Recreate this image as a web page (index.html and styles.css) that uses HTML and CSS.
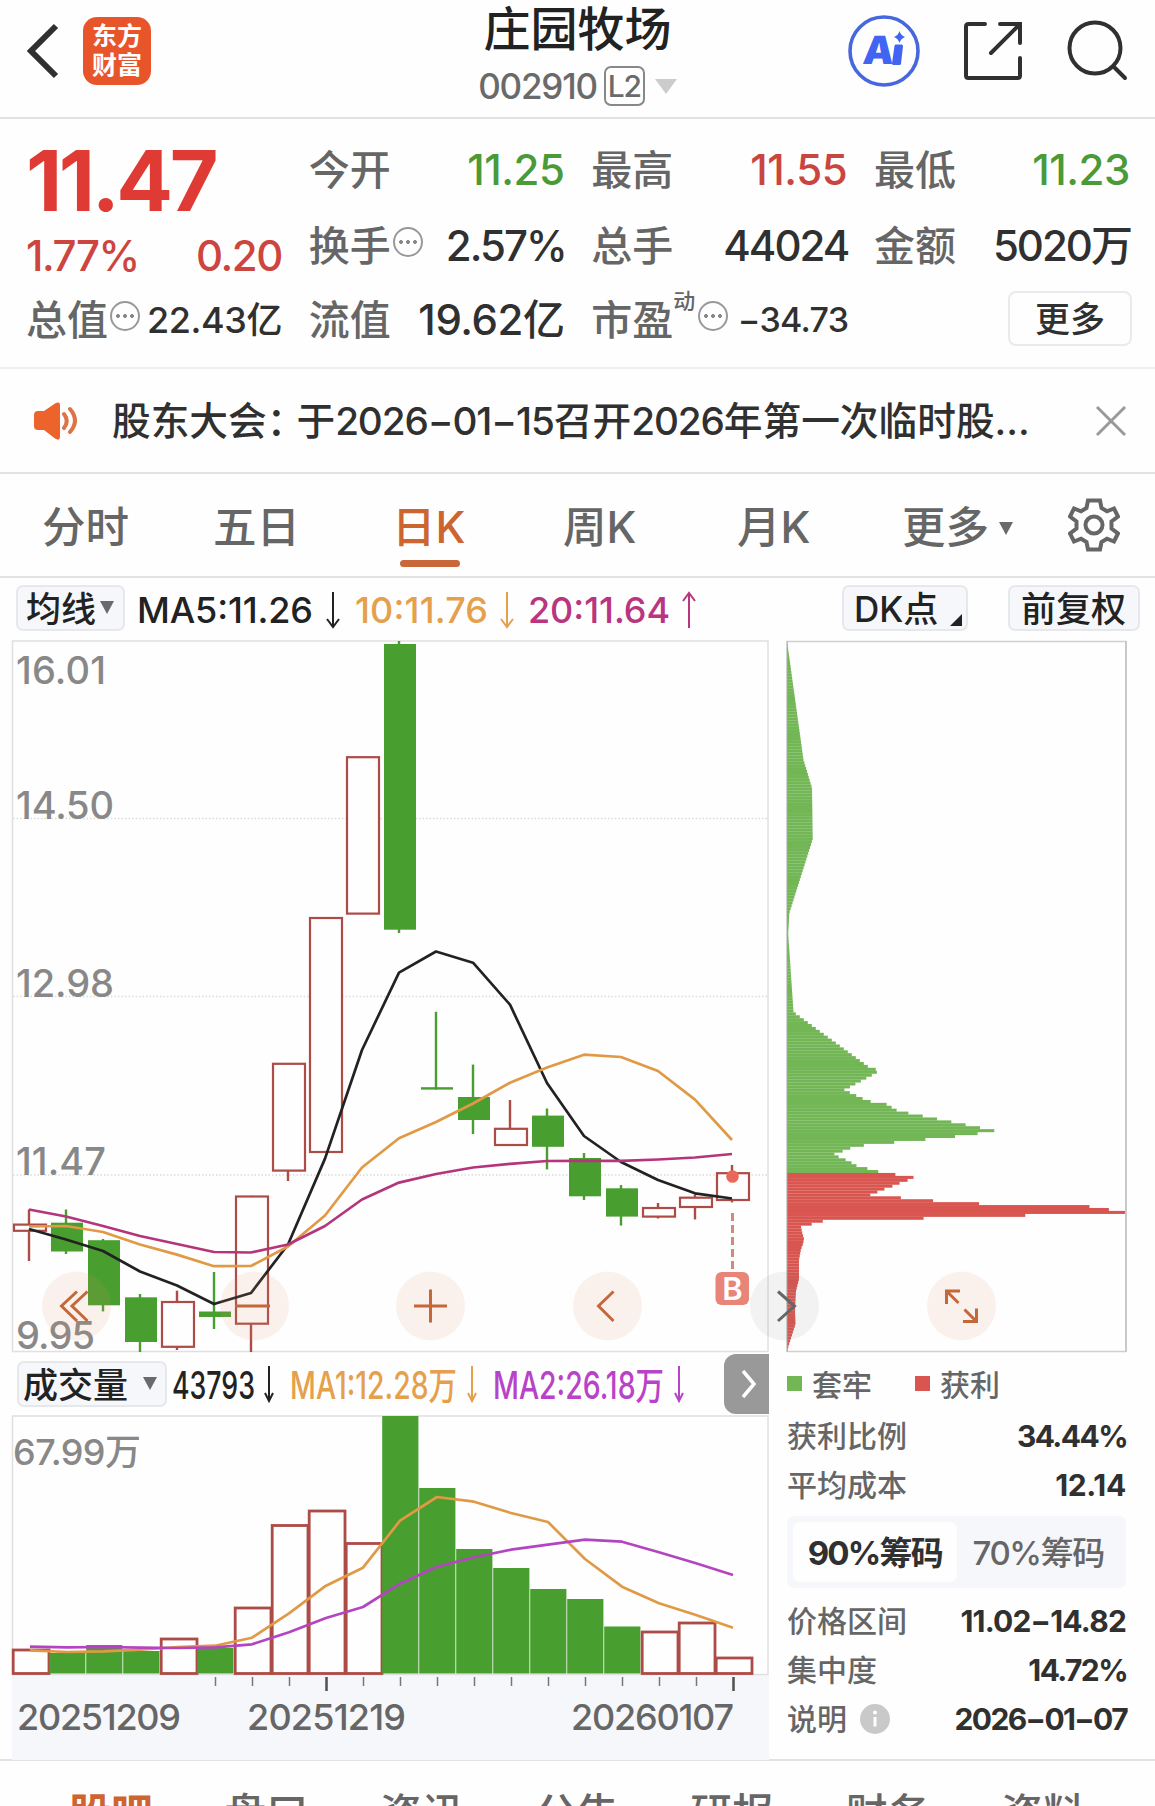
FILE: index.html
```html
<!DOCTYPE html>
<html lang="zh-CN">

<head>
    <meta charset="UTF-8">
    <title>庄园牧场 002910</title>
    <link rel="stylesheet" href="styles.css">
</head>

<body>
    <header class="topbar">
        <div class="topbar-left">
            <svg class="back" width="34" height="60" viewBox="0 0 34 60"><path d="M31 5 6 30l25 25" /></svg>
            <div class="logo"><span>东方</span><span>财富</span></div>
        </div>
        <div class="stock">
            <h1>庄园牧场</h1>
            <div class="code">002910<span class="level">L2</span><i class="tri"></i></div>
        </div>
        <div class="topbar-right">
            <svg width="74" height="74" viewBox="0 0 74 74">
                <circle cx="37" cy="37" r="34" fill="none" stroke="#4668dc" stroke-width="3.6" />
                <text x="0" y="0" transform="translate(15 50) skewX(-5)" class="ai">A</text>
                <path d="M49 32h5.500l-2 17.500h-6z" fill="#4164f2" stroke="#4164f2" stroke-width="3" stroke-linejoin="round" />
                <path d="M52.500 17q1.300 4.500 5.500 6-4.200 1.500-5.500 6-1.300-4.500-5.500-6 4.200-1.500 5.500-6z" fill="#4164f2" />
            </svg>
            <svg width="60" height="60" viewBox="0 0 60 60" class="line-icon">
                <path d="M22 3H5.500Q3 3 3 5.500v49Q3 57 5.500 57h49q2.500 0 2.500-2.500V37M37 3h20v19M57 3 28 32" />
            </svg>
            <svg width="62" height="62" viewBox="0 0 62 62" class="line-icon">
                <circle cx="29" cy="28" r="25.500" />
                <path d="m48 47 11 11" />
            </svg>
        </div>
    </header>

    <section class="quote">
        <div class="col first">
            <div class="price">11.47</div>
            <div class="row change"><b>1.77%</b><b>0.20</b></div>
            <div class="row small"><span>总值<i class="tip"></i></span><b>22.43亿</b></div>
        </div>
        <div class="col">
            <div class="row"><span>今开</span><b class="down">11.25</b></div>
            <div class="row"><span>换手<i class="tip"></i></span><b class="tight">2.57%</b></div>
            <div class="row"><span>流值</span><b>19.62亿</b></div>
        </div>
        <div class="col">
            <div class="row"><span>最高</span><b class="up">11.55</b></div>
            <div class="row"><span>总手</span><b class="tight">44024</b></div>
            <div class="row small pe"><span>市盈<sup>动</sup><i class="tip"></i></span><b>−34.73</b></div>
        </div>
        <div class="col">
            <div class="row"><span>最低</span><b class="down">11.23</b></div>
            <div class="row"><span>金额</span><b class="tight">5020万</b></div>
            <div class="row last"><button class="more">更多</button></div>
        </div>
    </section>

    <section class="notice">
        <svg width="48" height="40" viewBox="0 0 48 40">
            <path d="M2 14q0-4 4-4h6L23 2.500q5-3 5 2v31q0 5-5 2L12 29H6q-4 0-4-4z" fill="#ec642c" />
            <path d="M32 13q5.500 7 0 14M38 8q10 11.500 0 23" fill="none" stroke="#dd7447" stroke-width="4" stroke-linecap="round" />
        </svg>
        <p>股东大会<span class="colon">：</span>于<span class="num">2026−01−15</span>召开<span class="num">2026</span>年第一次临时股...</p>
        <svg class="close" width="32" height="32" viewBox="0 0 32 32"><path d="m2 2 28 28M30 2 2 30" /></svg>
    </section>

    <nav class="tabs">
        <span>分时</span>
        <span>五日</span>
        <span class="active">日K</span>
        <span>周K</span>
        <span>月K</span>
        <span class="tab-more">更多<i class="tri"></i></span>
        <svg width="52" height="54" viewBox="-26 -27 52 54" class="gear">
            <path d="M-6-24.500H6L7.500-17 13-13.700 20-16.500 24-8.500 17.500-3.500V3.500L24 8.500 20 16.500 13 13.700 7.500 17 6 24.500H-6L-7.500 17-13 13.700-20 16.500-24 8.500-17.500 3.500V-3.500L-24-8.500-20-16.500-13-13.700-7.500-17z" />
            <circle r="8.500" />
        </svg>
    </nav>

    <div class="toolbar">
        <button class="chip">均线<i class="tri"></i></button>
        <svg class="ma" width="590" height="46" viewBox="130 585 590 46">
            <text x="137" y="623" textLength="176" fill="#222">MA5:11.26</text>
            <path d="M333 592v34m-6-7 6 8 6-8" stroke="#222" />
            <text x="355" y="623" textLength="133" fill="#e5a04c">10:11.76</text>
            <path d="M507 592v34m-6-7 6 8 6-8" stroke="#e5a04c" />
            <text x="528" y="623" textLength="142" fill="#b9357f">20:11.64</text>
            <path d="M689 628v-34m-6 7 6-8 6 8" stroke="#b9357f" />
        </svg>
        <button class="chip dk">DK点<i class="corner"></i></button>
        <button class="chip fq">前复权</button>
    </div>

    <!-- K线 + 筹码分布 -->
    <svg class="kline" width="1155" height="713" viewBox="0 640 1155 713">
        <rect x="12.500" y="641" width="755.500" height="710.500" fill="none" stroke="#e0e0e0" stroke-width="1.500" />
        <path class="grid" d="M13 818.500h754M13 996.500h754M13 1175h754" />
        <g id="chips"></g>
        <path d="M787 641.500h339M787 1351.500h339" stroke="#d0d0d0" stroke-width="1.300" />
        <path d="M787 641v711" stroke="#a5a5a5" stroke-width="1" />
        <path d="M1126 641v711" stroke="#c9c9c9" stroke-width="2" />
        <g id="candles"></g>
        <g id="maLines"></g>
        <g class="scale">
            <text x="16" y="684" textLength="90">16.01</text>
            <text x="16" y="819" textLength="98">14.50</text>
            <text x="16" y="997" textLength="98">12.98</text>
            <text x="16" y="1175" textLength="90">11.47</text>
            <text x="16" y="1349" textLength="79">9.95</text>
        </g>

        <!-- 买入点 -->
        <circle cx="732.500" cy="1176.500" r="6.300" fill="#e8695c" />
        <path d="M732.500 1213v58" stroke="#cf8a7c" stroke-width="3" stroke-dasharray="8 4" />
        <rect x="715.500" y="1272" width="33.500" height="33" rx="6" fill="#e98478" />
        <text x="732.500" y="1299.500" class="buy">B</text>

        <g class="float">
            <circle cx="76.500" cy="1306" r="34.500" />
            <circle cx="254.500" cy="1306" r="34.500" />
            <circle cx="430.500" cy="1306" r="34.500" />
            <circle cx="607.500" cy="1306" r="34.500" />
            <circle cx="784.500" cy="1306" r="34.500" class="off" />
            <circle cx="961.500" cy="1306" r="34.500" />
            <path d="M77 1291.500 61.500 1306 77 1321M87.500 1291.500 72 1306 87.500 1321" />
            <path d="M235 1306h35" />
            <path d="M414 1306h33M430.500 1289.500v33" />
            <path d="M613.500 1291.500 598.500 1306l15 15" />
            <path d="m778 1291.500 16.500 14.500-16.500 15" class="off" />
            <path d="M946.500 1304v-13H960M947 1291.500l11.500 11.500M976.500 1308.500v13H963M976 1321l-11.500-11.500" />
        </g>
    </svg>

    <div class="lower">
        <section class="volume">
            <div class="vol-bar">
                <button class="chip">成交量<i class="tri"></i></button>
                <svg width="530" height="46" viewBox="170 1361 530 46" class="ma">
                    <text x="172" y="1399" textLength="83" lengthAdjust="spacingAndGlyphs" fill="#222">43793</text>
                    <path d="M269 1366v34m-4-7 4 8 4-8" stroke="#222" />
                    <text x="290" y="1399" textLength="167" lengthAdjust="spacingAndGlyphs" fill="#e5a04c">MA1:12.28万</text>
                    <path d="M472 1366v34m-4-7 4 8 4-8" stroke="#e5a04c" />
                    <text x="493" y="1399" textLength="171" lengthAdjust="spacingAndGlyphs" fill="#b842c8">MA2:26.18万</text>
                    <path d="M679 1366v34m-4-7 4 8 4-8" stroke="#b842c8" />
                </svg>
                <button class="next"><svg width="20" height="32" viewBox="0 0 20 32"><path d="m4 3 11 13L4 29" /></svg></button>
            </div>
            <svg width="769" height="345" viewBox="0 1415 769 345">
                <rect x="12" y="1675" width="757" height="85" fill="#f6f7fa" />
                <rect x="12.500" y="1416" width="755.500" height="258.500" fill="none" stroke="#e0e0e0" stroke-width="1.500" />
                <g id="volBars"></g>
                <g id="volLines"></g>
                <g id="ticks"></g>
                <g class="scale">
                    <text x="13" y="1465" textLength="128" class="vol-max">67.99万</text>
                </g>
                <g class="dates">
                    <text x="17" y="1730" textLength="164">20251209</text>
                    <text x="247" y="1730" textLength="159">20251219</text>
                    <text x="571" y="1730" textLength="163">20260107</text>
                </g>
            </svg>
        </section>

        <aside class="panel">
            <div class="legend">
                <span><i></i>套牢</span>
                <span class="win"><i></i>获利</span>
            </div>
            <div class="item"><span>获利比例</span><b class="tight">34.44%</b></div>
            <div class="item"><span>平均成本</span><b>12.14</b></div>
            <div class="switch">
                <span class="on">90%筹码</span>
                <span>70%筹码</span>
            </div>
            <div class="item"><span>价格区间</span><b class="range">11.02−14.82</b></div>
            <div class="item"><span>集中度</span><b class="tight">14.72%</b></div>
            <div class="item">
                <span>说明<svg width="30" height="30" viewBox="0 0 30 30"><circle cx="15" cy="15" r="15" fill="#c9c9c9" /><circle cx="15" cy="8.500" r="2" fill="#fff" /><path d="M15 13v9.500" stroke="#fff" stroke-width="3" /></svg></span>
                <b class="tight">2026−01−07</b>
            </div>
        </aside>
    </div>

    <nav class="bottom">
        <span class="active">股吧</span>
        <span>盘口</span>
        <span>资讯</span>
        <span>公告</span>
        <span>研报</span>
        <span>财务</span>
        <span>资料</span>
    </nav>

    <script src="chart.js"></script>
</body>

</html>
```

FILE: styles.css
```css
* {
    box-sizing: border-box;
}

body {
    margin: 0;
    width: 1155px;
    height: 1806px;
    overflow: hidden;
    background: #fefefe;
    color: #303030;
    font-family: Inter, "Noto Sans CJK SC", sans-serif;
    font-weight: 500;
    line-height: 1;
}

button {
    font: inherit;
    color: inherit;
    padding: 0;
}

svg {
    display: block;
    flex: none;
}

/* 小三角 */
.tri {
    display: inline-block;
    border: solid transparent;
    border-width: 13px 7.5px 0;
    border-top-color: #6a6a6a;
}

/* 顶部导航 */
.topbar {
    height: 119px;
    border-bottom: 2px solid #e2e2e2;
    display: grid;
    grid-template-columns: 1fr auto 1fr;
}

.topbar-left {
    display: flex;
    align-items: center;
    height: 102px;
    padding-left: 25px;
    gap: 24px;
}

.back path {
    fill: none;
    stroke: #303030;
    stroke-width: 6;
}

.logo {
    width: 68px;
    height: 68px;
    border-radius: 14px;
    background: #e9552a;
    color: #fff;
    display: flex;
    flex-direction: column;
    align-items: center;
    justify-content: center;
    gap: 4px;
    font-size: 25px;
    font-weight: 700;
}

.stock {
    display: flex;
    flex-direction: column;
    align-items: center;
    padding-top: 5px;
}

.stock h1 {
    margin: 0;
    font-size: 47px;
    font-weight: 500;
    color: #222;
}

.code {
    display: flex;
    align-items: center;
    height: 40px;
    margin-top: 14px;
    font-size: 35px;
    letter-spacing: -1.2px;
    color: #6a6a6a;
}

.level {
    width: 41px;
    height: 40px;
    margin-left: 7px;
    border: 2px solid #888;
    border-radius: 7px;
    font-size: 30px;
    line-height: 37px;
    text-align: center;
}

.code .tri {
    margin-left: 10px;
    border-width: 15px 11.5px 0;
    border-top-color: #ccc;
}

.topbar-right {
    display: flex;
    align-items: center;
    justify-content: flex-end;
    height: 102px;
    padding-right: 27px;
}

.topbar-right svg + svg {
    margin-left: 42px;
}

.topbar-right svg:last-child {
    margin-left: 43px;
}

.line-icon {
    fill: none;
    stroke: #303030;
    stroke-width: 4;
    stroke-linecap: round;
}

.ai {
    font-size: 39px;
    font-weight: 900;
    fill: #4164f2;
}

/* 行情数据 */
.quote {
    height: 250px;
    padding: 13px 25px 0 26px;
    border-bottom: 2px solid #f0f0f0;
    display: grid;
    grid-template-columns: repeat(4, 256px);
    justify-content: space-between;
}

.row {
    display: flex;
    align-items: center;
    justify-content: space-between;
    height: 76px;
    font-size: 41px;
    color: #666;
    white-space: nowrap;
}

.row:last-child {
    height: 72px;
}

.row span {
    display: flex;
    align-items: center;
}

.row b {
    font-size: 42px;
    font-weight: 500;
    letter-spacing: -.4px;
    color: #303030;
}

.row b.tight {
    letter-spacing: -2px;
    margin-right: -1px;
}

.row.small b {
    font-size: 36px;
}

.row.pe b {
    font-size: 34px;
    letter-spacing: -.7px;
    margin-right: -1px;
}

.row .up {
    color: #c9453d;
}

.row .down {
    color: #4a9a38;
}

.price {
    height: 96px;
    line-height: 98px;
    font-size: 84px;
    font-weight: 700;
    letter-spacing: -3.4px;
    color: #df3a33;
}

.change {
    height: 56px;
}

.row.change b {
    letter-spacing: -1.4px;
    color: #cc453e;
}

.tip {
    width: 30px;
    height: 30px;
    margin: -8px 0 0 2px;
    border: 2px solid #999;
    border-radius: 50%;
    background:
        radial-gradient(circle at 6px 13px, #888 1.7px, transparent 2.2px),
        radial-gradient(circle at 13px 13px, #888 1.7px, transparent 2.2px),
        radial-gradient(circle at 20px 13px, #888 1.7px, transparent 2.2px);
}

.row sup {
    font-size: 22px;
    align-self: flex-start;
    margin-top: -10px;
}

.pe .tip {
    margin-left: 3px;
}

.last {
    justify-content: flex-end;
}

.more {
    width: 124px;
    height: 55px;
    margin: -4px -2px 0 0;
    padding-top: 2px;
    border: 2px solid #e8eaec;
    border-radius: 8px;
    background: #fefefe;
    color: #303030;
    font-size: 35px;
}

/* 公告条 */
.notice {
    height: 105px;
    padding: 0 28px 0 32px;
    border-bottom: 2px solid #e2e2e2;
    display: flex;
    align-items: center;
}

.notice p {
    flex: 1;
    margin: 2px 0 0 32px;
    font-size: 38.7px;
    white-space: nowrap;
}

.notice .colon {
    margin-right: -9px;
}

.notice .num {
    letter-spacing: -1.1px;
}

.close path {
    fill: none;
    stroke: #999;
    stroke-width: 3;
}

/* 周期切换 */
.tabs {
    height: 104px;
    padding: 0 35px 0 42px;
    border-bottom: 2px solid #e2e2e2;
    display: grid;
    grid-template-columns: 171px 179px 171px 174px 165px 1fr 52px;
    align-items: center;
    justify-items: start;
    font-size: 43.5px;
    color: #666;
}

.tabs span {
    margin-top: 6px;
}

.tabs .active {
    position: relative;
    color: #cd6531;
}

.tabs .active::after {
    content: "";
    position: absolute;
    left: 8px;
    bottom: -17px;
    width: 60px;
    height: 7px;
    border-radius: 4px;
    background: #c9673a;
}

.tab-more {
    display: flex;
    align-items: center;
    gap: 10px;
}

.gear {
    fill: none;
    stroke: #666;
    stroke-width: 4;
}

/* 指标栏 */
.toolbar {
    height: 62px;
    padding: 7px 15px 0 16px;
    display: flex;
}

.chip {
    position: relative;
    display: flex;
    align-items: center;
    height: 46px;
    padding: 3px 0 0 8px;
    border: 2px solid #e6e8ec;
    border-radius: 7px;
    background: #f6f7fa;
    color: #222;
    font-size: 35px;
}

.toolbar .chip:first-child {
    width: 109px;
}

.chip .tri {
    margin: -4px 0 0 4px;
}

.toolbar .ma {
    margin-left: 5px;
}

.ma text {
    font-size: 36px;
}

.ma path {
    fill: none;
    stroke-width: 2;
}

.dk {
    width: 126px;
    margin-left: auto;
    padding-left: 10px;
}

.corner {
    position: absolute;
    right: 4px;
    bottom: 3px;
    border: 6px solid transparent;
    border-right-color: #222;
    border-bottom-color: #222;
}

.fq {
    width: 132px;
    margin-left: 40px;
    padding-left: 11px;
}

/* K线 */
.grid {
    stroke: #dcdcdc;
    stroke-width: 1.5;
    stroke-dasharray: 1.5 2;
}

.scale text {
    font-size: 38px;
    fill: #888;
}

.rise {
    fill: #fefefe;
    stroke: #ad4b46;
    stroke-width: 2.2;
}

.fall {
    fill: #489e2e;
}

.wick-rise {
    stroke: #ad4b46;
    stroke-width: 2.4;
}

.wick-fall {
    stroke: #489e2e;
    stroke-width: 2.4;
}

.line {
    fill: none;
    stroke-width: 2.7;
    stroke-linejoin: round;
}

.buy {
    font-size: 31px;
    font-weight: 600;
    fill: #fff;
    text-anchor: middle;
}

.float circle {
    fill: rgba(232, 150, 105, .12);
}

.float circle.off {
    fill: rgba(120, 120, 120, .09);
}

.float path {
    fill: none;
    stroke: #c4683a;
    stroke-width: 3;
}

.float path.off {
    stroke: #666;
}

/* 成交量 + 筹码数据 */
.lower {
    display: flex;
    height: 408px;
    border-bottom: 2px solid #e2e2e2;
}

.volume {
    width: 769px;
}

.vol-bar {
    display: flex;
    height: 62px;
    padding: 8px 0 0 17px;
}

.vol-bar .chip {
    width: 150px;
    padding-left: 4px;
}

.vol-bar .chip .tri {
    margin-left: 15px;
}

.vol-bar .ma {
    margin-left: 3px;
}

.vol-bar .ma text {
    font-size: 38px;
}

.next {
    width: 45px;
    height: 60px;
    margin: -7px 0 0 auto;
    padding-left: 15px;
    border: 0;
    border-radius: 12px 0 0 12px;
    background: #999;
}

.next path {
    fill: none;
    stroke: #fff;
    stroke-width: 3.5;
}

#volBars .rise {
    stroke-width: 2.8;
}

.scale .vol-max {
    font-size: 36px;
}

.dates text {
    font-size: 36px;
    fill: #666;
}

.tick {
    stroke: #777;
    stroke-width: 1.5;
}

.tick.major {
    stroke: #555;
    stroke-width: 2.6;
}

.panel {
    width: 339px;
    margin-left: 18px;
    padding-top: 6px;
    font-size: 30px;
    color: #666;
}

.legend {
    display: flex;
    gap: 43px;
    height: 52px;
    align-items: center;
}

.legend i {
    display: inline-block;
    width: 15px;
    height: 15px;
    margin-right: 10px;
    background: #72b655;
    vertical-align: 5px;
}

.legend .win i {
    background: #d9554f;
}

.item {
    display: flex;
    align-items: center;
    justify-content: space-between;
    height: 49px;
}

.item span {
    display: flex;
    align-items: center;
    gap: 13px;
}

.item b {
    font-size: 30px;
    font-weight: 700;
    letter-spacing: -.3px;
    color: #303030;
}

.item .tight {
    letter-spacing: -1.6px;
    margin-right: -1px;
}

.item .range {
    letter-spacing: -.8px;
}

.switch {
    display: flex;
    height: 72px;
    margin: 7px 0 8px;
    padding: 6px;
    border-radius: 7px;
    background: #f6f7fa;
    font-size: 33px;
    text-align: center;
    line-height: 62px;
}

.switch span {
    flex: 1;
    white-space: nowrap;
    letter-spacing: -1.4px;
}

.switch .on {
    height: 60px;
    border-radius: 7px;
    background: #fefefe;
    color: #303030;
    font-weight: 700;
    letter-spacing: -1.8px;
}

/* 底部栏目 */
.bottom {
    display: flex;
    justify-content: space-between;
    padding: 32px 70px 0 69px;
    font-size: 42px;
    color: #666;
}

.bottom .active {
    color: #cd6531;
    font-weight: 700;
}
```

FILE: chart.js
```js
const NS = 'http://www.w3.org/2000/svg';
const STEP = 37;

function add(id, tag, attrs) {
    const el = document.createElementNS(NS, tag);
    for (const key in attrs) el.setAttribute(key, attrs[key]);
    document.getElementById(id).appendChild(el);
}

function polyline(id, x0, ys, color) {
    add(id, 'polyline', {
        class: 'line',
        stroke: color,
        points: ys.map((y, i) => (x0 + i * STEP) + ',' + y).join(' ')
    });
}

// [涨跌, 最高, 实体上沿, 实体下沿, 最低]
const candles = [
    [1, 1209.5, 1224.6, 1230.8, 1261], [0, 1209.5, 1222.7, 1251.5, 1254],
    [0, 1239, 1240.2, 1305.3, 1311.4], [0, 1294, 1297.3, 1342, 1352],
    [1, 1290.7, 1302, 1346.8, 1350], [0, 1272, 1311.5, 1317, 1329],
    [1, 1195.8, 1196.5, 1323.7, 1352], [1, 1063.2, 1063.8, 1170.6, 1181],
    [1, 917.4, 918, 1152, 1152], [1, 757, 757.2, 913.6, 913.6],
    [0, 641, 644, 929.7, 933], [0, 1011.8, 1087.2, 1089.6, 1089.6],
    [0, 1064.6, 1097, 1120, 1134], [1, 1100, 1128.8, 1145, 1145],
    [0, 1108.5, 1115.6, 1146.8, 1169.4], [0, 1153, 1158, 1196.3, 1200],
    [0, 1185, 1188.3, 1216.6, 1225.6], [1, 1203, 1208, 1216.6, 1218.5],
    [1, 1194.4, 1197.7, 1207, 1219.4], [1, 1165, 1173.2, 1200, 1202.4]
];

candles.forEach(([up, high, top, bottom, low], i) => {
    const x = 29 + i * STEP;
    add('candles', 'line', { x1: x, x2: x, y1: high, y2: low, class: up ? 'wick-rise' : 'wick-fall' });
    add('candles', 'rect', {
        x: x - 15, y: top, width: 32, height: bottom - top,
        class: up ? 'rise' : 'fall'
    });
});

polyline('maLines', 29, [1229, 1239.5, 1251, 1271.5, 1285.5, 1304, 1293, 1244.5, 1158.6, 1050, 972.6, 951.5, 962.7, 1004.7, 1083, 1136, 1162, 1180, 1193.3, 1198.5], '#222');
polyline('maLines', 29, [1226.5, 1226, 1232, 1244.5, 1254.6, 1266.2, 1266, 1246.5, 1215.5, 1167.5, 1138.3, 1122, 1103.5, 1082.8, 1067.5, 1054.7, 1057, 1071, 1099.6, 1140], '#e09a45');
polyline('maLines', 29, [1209.5, 1216.5, 1226, 1236, 1244, 1252, 1252.5, 1244.5, 1226, 1199.5, 1182.6, 1174, 1167.5, 1163.8, 1161, 1160.8, 1160.8, 1159.5, 1157.5, 1154], '#b5357c');

// 筹码分布 [y, 宽度]
const spread = [
    [641, 0], [760, 16.5], [788, 25], [839, 25.7], [913, 2.3], [934, 1.2], [1012, 6.5], [1014, 9],
    [1068, 83], [1070.3, 93], [1074, 87], [1090, 57], [1101, 81], [1104, 99], [1111, 111],
    [1131.2, 210], [1134, 187], [1137, 164], [1140, 132], [1143, 100], [1146, 69], [1149, 61],
    [1151.7, 54], [1154.5, 46], [1157.5, 53], [1160, 59], [1163, 65], [1166, 70], [1169, 82], [1172, 93],
    [1174.7, 110], [1177.6, 128], [1180.5, 120], [1183.4, 112], [1186.3, 105], [1189.2, 97],
    [1192.1, 90], [1195, 83], [1197.9, 115], [1200.8, 147], [1203.7, 193], [1206.6, 304],
    [1209.5, 322], [1212.4, 339], [1215.3, 239], [1218.2, 138], [1221.1, 36], [1224, 25],
    [1226.9, 14], [1232, 15], [1239, 17], [1244, 16], [1249, 14], [1260, 12], [1279, 12],
    [1291, 9], [1310, 8], [1324, 8.5], [1338, 4], [1351, 0]
];

function widthAt(y) {
    const i = spread.findIndex(p => p[0] >= y);
    if (i < 1) return 0;
    const [y0, w0] = spread[i - 1];
    const [y1, w1] = spread[i];
    return w0 + (w1 - w0) * (y - y0) / (y1 - y0);
}

// 以 1212.4 (最大值) 为基准对齐
for (let n = -195; n <= 47; n++) {
    const y = 1212.4 + n * 2.92;
    add('chips', 'rect', {
        x: 787, y: y - 1.5, width: widthAt(y), height: 3.05,
        fill: y < 1173.2 ? '#72b655' : '#d9554f'
    });
}

// 成交量 [涨跌, 上沿]
const volumes = [
    [1, 1650], [0, 1653], [0, 1645], [0, 1651], [1, 1639], [0, 1648], [1, 1608], [1, 1525.5],
    [1, 1511], [1, 1543.5], [0, 1416], [0, 1488], [0, 1549], [0, 1568], [0, 1589], [0, 1599],
    [0, 1626.5], [1, 1632], [1, 1623], [1, 1658]
];

volumes.forEach(([up, top], i) => {
    const x = 12 + i * STEP;
    add('volBars', 'rect', {
        x: up ? x + 1.2 : x + .2, y: top, width: up ? 35.8 : 36.2, height: 1673.5 - top,
        class: up ? 'rise' : 'fall'
    });
});

polyline('volLines', 30, [1650.3, 1652, 1651.3, 1649.7, 1647, 1645.7, 1637.7, 1613.3, 1585.7, 1567.7, 1520.7, 1497, 1501.7, 1513, 1522, 1559, 1586.7, 1603.3, 1615, 1627.7], '#e09a45');
polyline('volLines', 30, [1646.7, 1647.3, 1647, 1647.7, 1648, 1647.3, 1644.3, 1632.3, 1618, 1607, 1583.7, 1566.7, 1557.3, 1549.7, 1544.7, 1539.7, 1541.7, 1552.3, 1563.3, 1575], '#b445c0');

for (let i = 0; i < 15; i++) {
    const major = i === 3 || i === 14;
    const x = 215.5 + i * STEP;
    add('ticks', 'line', { x1: x, x2: x, y1: 1677, y2: major ? 1691 : 1686, class: major ? 'tick major' : 'tick' });
}
```
